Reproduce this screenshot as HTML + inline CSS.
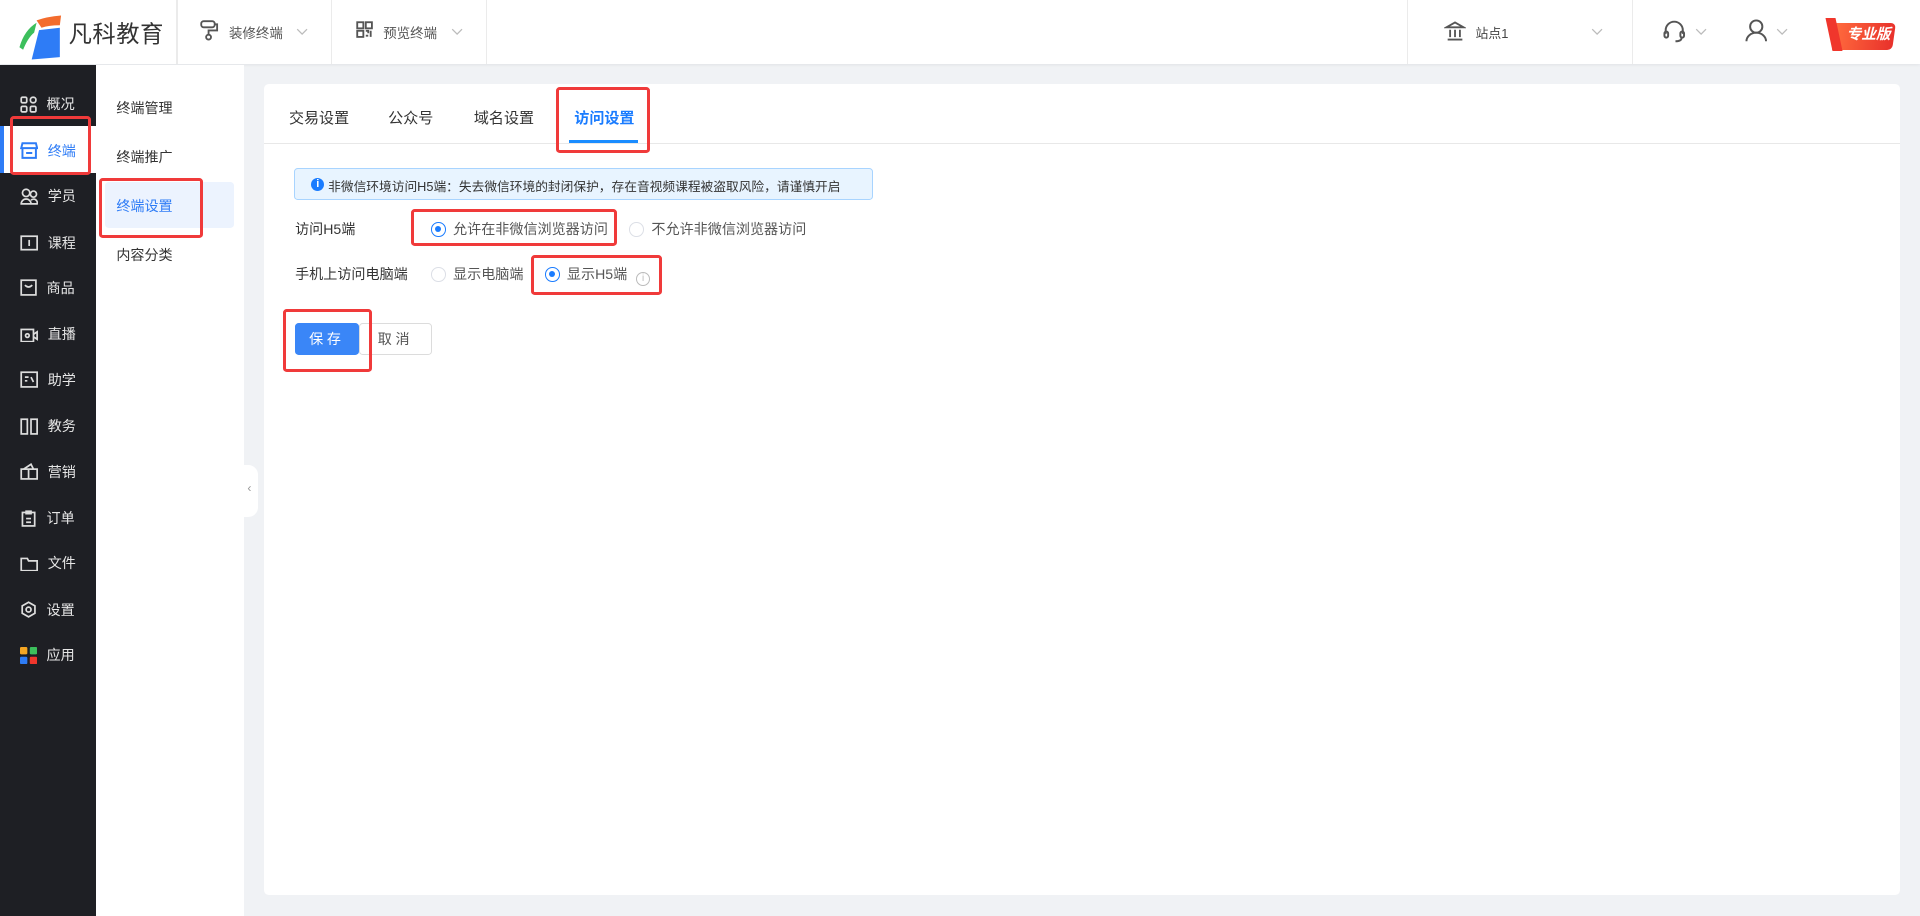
<!DOCTYPE html>
<html><head><meta charset="utf-8"><style>
html,body{margin:0;padding:0;width:1920px;height:916px;overflow:hidden;background:#f0f2f5}
#w{zoom:1.2245;width:1568px;height:748px;position:relative;font-family:"Liberation Sans","Noto Sans CJK SC",sans-serif;font-size:11.5px;color:#333}
.a{position:absolute}
.red{position:absolute;border:3px solid #f03a3a;border-radius:3px;box-sizing:border-box}
.vd{position:absolute;top:0;width:1px;height:52px;background:#ebebeb}
.si{position:absolute;left:16px;color:#e6e6e6;font-size:11.5px;display:flex;align-items:center}
.si svg{margin-right:8px}
.s2{position:absolute;left:95px;font-size:11.5px;color:#333}
.radio{display:inline-block;width:12px;height:12px;border:1px solid #dcdfe6;border-radius:50%;box-sizing:border-box;vertical-align:-2px;margin-right:6px;position:relative}
.radio.on{border-color:#1a7cff}
.radio.on:after{content:"";position:absolute;left:2.5px;top:2.5px;width:5px;height:5px;border-radius:50%;background:#1a7cff}
.chev{position:absolute;width:10px;height:6px}
</style></head><body><div id="w">
<div class="a" style="left:0;top:0;width:1568px;height:52px;background:#fff;box-shadow:0 1px 3px rgba(0,0,0,.08)"></div>
<svg class="a" style="left:14px;top:11px" width="38" height="38" viewBox="0 0 38 38"><path d="M2 28 Q6 14 16 8 L14 16 Q9 20 5 30Z" fill="#3cbf5c"/><path d="M16 6 Q24 3 36 2 L35 10 Q26 10 20 12Z" fill="#f36c2d"/><path d="M18 14 L35 12 L35 36 L12 38 Z" fill="#2e7cf6"/></svg>
<div class="a" style="left:56px;top:12px;font-size:19px;color:#333;letter-spacing:0.5px">凡科教育</div>
<div class="vd" style="left:144px"></div><div class="vd" style="left:270px"></div><div class="vd" style="left:397px"></div><div class="vd" style="left:1149px"></div><div class="vd" style="left:1333px"></div>
<svg class="a" style="left:163px;top:16px" width="16" height="18" viewBox="0 0 16 18" fill="none" stroke="#555" stroke-width="1.5"><rect x="1" y="1" width="11" height="5" rx="2"/><path d="M12 3.5h2v5H7v3"/><circle cx="7" cy="14" r="2"/></svg>
<div class="a" style="left:187px;top:18px;color:#555;font-size:11px">装修终端</div>
<svg class="chev" style="left:242px;top:23px" viewBox="0 0 10 6"><path d="M1 1l4 4 4-4" fill="none" stroke="#bbb"/></svg>
<svg class="a" style="left:291px;top:17px" width="14" height="14" viewBox="0 0 14 14" fill="none" stroke="#555" stroke-width="1.5"><rect x="1" y="1" width="5" height="5"/><rect x="8" y="1" width="5" height="5"/><rect x="1" y="8" width="5" height="5"/><path d="M8 8h2v2M12 8v5M8 12h2"/></svg>
<div class="a" style="left:313px;top:18px;color:#555;font-size:11px">预览终端</div>
<svg class="chev" style="left:368px;top:23px" viewBox="0 0 10 6"><path d="M1 1l4 4 4-4" fill="none" stroke="#bbb"/></svg>
<svg class="a" style="left:1179px;top:16px" width="18" height="18" viewBox="0 0 18 18" fill="none" stroke="#555" stroke-width="1.5"><path d="M2 6 L9 2 L16 6Z M3 16h12M5 8v6M9 8v6M13 8v6"/></svg>
<div class="a" style="left:1205px;top:19px;color:#444;font-size:10.5px">站点1</div>
<svg class="chev" style="left:1299px;top:23px" viewBox="0 0 10 6"><path d="M1 1l4 4 4-4" fill="none" stroke="#bbb"/></svg>
<svg class="a" style="left:1357px;top:15px" width="20" height="22" viewBox="0 0 20 22" fill="none" stroke="#555" stroke-width="1.6"><path d="M3 13V10a7 7 0 0 1 14 0v3"/><rect x="2" y="11" width="3" height="5" rx="1.5"/><rect x="15" y="11" width="3" height="5" rx="1.5"/><path d="M16 16q0 3-5 3"/></svg>
<svg class="chev" style="left:1384px;top:23px" viewBox="0 0 10 6"><path d="M1 1l4 4 4-4" fill="none" stroke="#bbb"/></svg>
<svg class="a" style="left:1424px;top:15px" width="20" height="20" viewBox="0 0 20 20" fill="none" stroke="#555" stroke-width="1.6"><circle cx="10" cy="7" r="5"/><path d="M2 19a8 7 0 0 1 16 0"/></svg>
<svg class="chev" style="left:1450px;top:23px" viewBox="0 0 10 6"><path d="M1 1l4 4 4-4" fill="none" stroke="#bbb"/></svg>
<div class="a" style="left:1498px;top:19px;width:49px;height:22px;background:linear-gradient(90deg,#ff6a3d,#e8312b);border-radius:0 4px 4px 0;transform:skewX(-8deg)"></div>
<div class="a" style="left:1494px;top:15px;width:8px;height:27px;background:#f0362c;transform:skewX(12deg)"></div>
<div class="a" style="left:1508px;top:19px;color:#fff;font-size:12px;font-weight:bold;font-style:italic">专业版</div>
<div class="a" style="left:0;top:53px;width:78px;height:695px;background:#1e1f24"></div>
<div class="a" style="left:0;top:103px;width:78px;height:38px;background:#fff"></div>
<div class="a" style="left:0;top:103px;width:3px;height:38px;background:#2e7cf6"></div>
<div class="si" style="top:77px"><svg width="14" height="14" viewBox="0 0 14 14" fill="none" stroke="#ddd" stroke-width="1.4"><rect x="1" y="1" width="4.5" height="4.5" rx="1"/><rect x="8.5" y="1" width="4.5" height="4.5" rx="2"/><rect x="1" y="8.5" width="4.5" height="4.5" rx="1"/><rect x="8.5" y="8.5" width="4.5" height="4.5" rx="1"/></svg>概况</div>
<div class="si" style="top:115px;color:#2e7cf6"><svg width="15" height="14" viewBox="0 0 15 14" fill="none" stroke="#2e7cf6" stroke-width="1.6"><path d="M2 1h11l1 4H1Z M2 5v8h11V5M5 9h5"/></svg>终端</div>
<div class="si" style="top:152px"><svg width="15" height="14" viewBox="0 0 15 14" fill="none" stroke="#ddd" stroke-width="1.4"><circle cx="5" cy="4" r="3"/><circle cx="11" cy="5" r="2.5"/><path d="M1 13a4 4 0 0 1 8 0ZM9 13h5a3 3 0 0 0-5-3"/></svg>学员</div>
<div class="si" style="top:190px"><svg width="15" height="13" viewBox="0 0 15 13" fill="none" stroke="#ddd" stroke-width="1.4"><rect x="1" y="1" width="13" height="11"/><path d="M7.5 4v5"/></svg>课程</div>
<div class="si" style="top:227px"><svg width="14" height="14" viewBox="0 0 14 14" fill="none" stroke="#ddd" stroke-width="1.4"><rect x="1" y="1" width="12" height="12"/><path d="M4 5q3 3 6 0"/></svg>商品</div>
<div class="si" style="top:265px"><svg width="15" height="13" viewBox="0 0 15 13" fill="none" stroke="#ddd" stroke-width="1.4"><rect x="1" y="2" width="10" height="10"/><path d="M11 6l3-2v6l-3-2"/><circle cx="6" cy="7" r="1.5"/></svg>直播</div>
<div class="si" style="top:302px"><svg width="15" height="14" viewBox="0 0 15 14" fill="none" stroke="#ddd" stroke-width="1.4"><rect x="1" y="1" width="13" height="12"/><path d="M4 5h3M4 8h2M9 5l2 4"/></svg>助学</div>
<div class="si" style="top:340px"><svg width="15" height="14" viewBox="0 0 15 14" fill="none" stroke="#ddd" stroke-width="1.4"><rect x="1" y="1" width="5" height="12"/><rect x="9" y="1" width="5" height="12"/></svg>教务</div>
<div class="si" style="top:377px"><svg width="15" height="14" viewBox="0 0 15 14" fill="none" stroke="#ddd" stroke-width="1.4"><rect x="1" y="5" width="13" height="8"/><path d="M3 5l6-4 2 4M7 5v8"/></svg>营销</div>
<div class="si" style="top:415px"><svg width="14" height="14" viewBox="0 0 14 14" fill="none" stroke="#ddd" stroke-width="1.4"><rect x="2" y="2" width="10" height="11"/><path d="M5 1h4v2H5zM5 7h4M5 10h4"/></svg>订单</div>
<div class="si" style="top:452px"><svg width="15" height="13" viewBox="0 0 15 13" fill="none" stroke="#ddd" stroke-width="1.4"><path d="M1 2h5l1 2h7v8H1Z"/></svg>文件</div>
<div class="si" style="top:490px"><svg width="14" height="14" viewBox="0 0 14 14" fill="none" stroke="#ddd" stroke-width="1.4"><path d="M7 1l5.2 3v6L7 13 1.8 10V4Z"/><circle cx="7" cy="7" r="2"/></svg>设置</div>
<div class="si" style="top:527px"><svg width="14" height="14" viewBox="0 0 14 14"><rect x="0" y="0" width="6" height="6" rx="1" fill="#f5a623"/><rect x="8" y="0" width="6" height="6" rx="1" fill="#3cbf5c"/><rect x="0" y="8" width="6" height="6" rx="1" fill="#2e7cf6"/><rect x="8" y="8" width="6" height="6" rx="1" fill="#f0362c"/></svg>应用</div>
<div class="a" style="left:78px;top:53px;width:121px;height:695px;background:#fff"></div>
<div class="a" style="left:86px;top:149px;width:105px;height:37px;background:#ecf3fe;border-radius:3px"></div>
<div class="s2" style="top:80px">终端管理</div>
<div class="s2" style="top:120px">终端推广</div>
<div class="s2" style="top:160px;color:#2e7cf6">终端设置</div>
<div class="s2" style="top:200px">内容分类</div>
<div class="a" style="left:199px;top:380px;width:12px;height:42px;background:#fff;border-radius:0 8px 8px 0"></div>
<div class="a" style="left:202px;top:393px;color:#999;font-size:10px">‹</div>
<div class="a" style="left:216px;top:69px;width:1336px;height:662px;background:#fff;border-radius:4px"></div>
<div class="a" style="left:216px;top:117px;width:1336px;height:1px;background:#e8e8e8"></div>
<div class="a" style="left:236px;top:87px;font-size:12.3px">交易设置</div>
<div class="a" style="left:317px;top:87px;font-size:12.3px">公众号</div>
<div class="a" style="left:387px;top:87px;font-size:12.3px">域名设置</div>
<div class="a" style="left:469px;top:87px;font-size:12.3px;color:#1a7cff;font-weight:bold">访问设置</div>
<div class="a" style="left:465px;top:114px;width:56px;height:3px;background:#1a8cff"></div>
<div class="a" style="left:240px;top:137px;width:473px;height:26px;box-sizing:border-box;background:#e8f4ff;border:1px solid #a8d4ff;border-radius:3px"></div>
<div class="a" style="left:254px;top:145px;width:11px;height:11px;border-radius:50%;background:#1a7cff;color:#fff;font-size:9px;line-height:11px;text-align:center;font-weight:bold">i</div>
<div class="a" style="left:268px;top:144px;font-size:10.4px;color:#333;white-space:nowrap">非微信环境访问H5端：失去微信环境的封闭保护，存在音视频课程被盗取风险，请谨慎开启</div>
<div class="a" style="left:241px;top:179px">访问H5端</div>
<div class="a" style="left:352px;top:179px;color:#555"><span class="radio on"></span>允许在非微信浏览器访问</div>
<div class="a" style="left:514px;top:179px;color:#555"><span class="radio"></span>不允许非微信浏览器访问</div>
<div class="a" style="left:241px;top:216px">手机上访问电脑端</div>
<div class="a" style="left:352px;top:216px;color:#555"><span class="radio"></span>显示电脑端</div>
<div class="a" style="left:445px;top:216px;color:#555"><span class="radio on"></span>显示H5端 <span style="display:inline-block;width:10px;height:10px;border:1px solid #bbb;border-radius:50%;font-size:8px;line-height:10px;text-align:center;color:#bbb;margin-left:4px;vertical-align:-1px">i</span></div>
<div class="a" style="left:241px;top:264px;width:52px;height:26px;background:#3a86f7;border-radius:3px;color:#fff;text-align:center;line-height:27px;letter-spacing:3px">保存</div>
<div class="a" style="left:293px;top:264px;width:60px;height:26px;box-sizing:border-box;border:1px solid #dcdcdc;border-radius:3px;color:#555;text-align:center;line-height:25px;letter-spacing:3px">取消</div>
<div class="red" style="left:8px;top:95px;width:66px;height:48px"></div>
<div class="red" style="left:81px;top:145px;width:85px;height:49px"></div>
<div class="red" style="left:454px;top:71px;width:77px;height:54px"></div>
<div class="red" style="left:336px;top:171px;width:168px;height:30px"></div>
<div class="red" style="left:434px;top:208px;width:107px;height:33px"></div>
<div class="red" style="left:231px;top:252px;width:73px;height:52px"></div>
</div></body></html>
